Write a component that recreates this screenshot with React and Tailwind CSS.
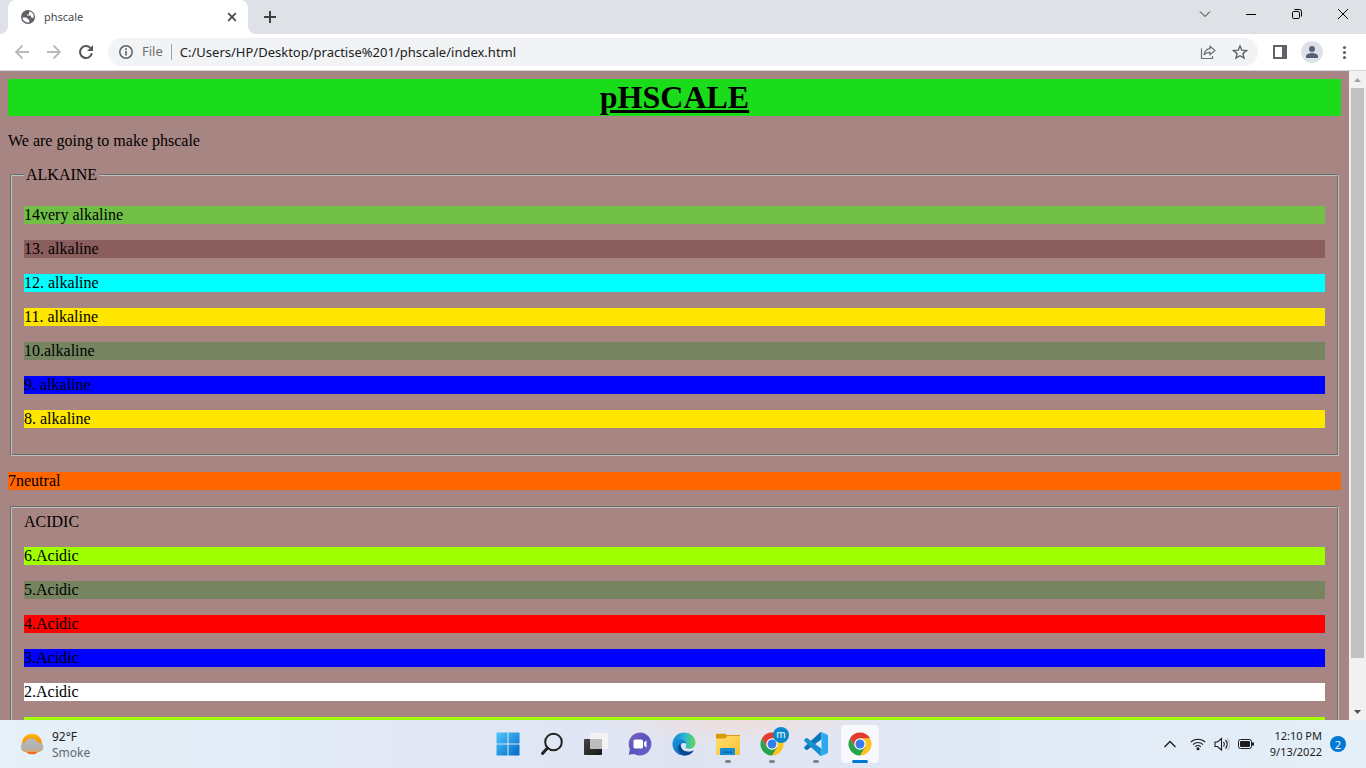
import React from "react";

const alkaline = [
  { text: "14very alkaline", color: "bg-[#72bf48]" },
  { text: "13. alkaline", color: "bg-[#8b5e5e]" },
  { text: "12. alkaline", color: "bg-[#00ffff]" },
  { text: "11. alkaline", color: "bg-[#ffe600]" },
  { text: "10.alkaline", color: "bg-[#768560]" },
  { text: "9. alkaline", color: "bg-[#0000ff]" },
  { text: "8. alkaline", color: "bg-[#ffe600]" },
];

const acidic = [
  { text: "6.Acidic", color: "bg-[#a0ff00]" },
  { text: "5.Acidic", color: "bg-[#768560]" },
  { text: "4.Acidic", color: "bg-[#ff0000]" },
  { text: "3.Acidic", color: "bg-[#0000ff]" },
  { text: "2.Acidic", color: "bg-white" },
];

function TabStrip() {
  return (
    <header className="flex h-[34px] shrink-0 bg-[#dee1e6]">
      <div className="flex w-2 items-end bg-white">
        <div className="h-full w-full rounded-br-lg bg-[#dee1e6]" />
      </div>
      <div className="flex w-60 items-center rounded-t-lg bg-white pr-2 pl-3">
        <svg className="size-4" viewBox="0 0 16 16" aria-hidden="true">
          <circle cx="8" cy="8" r="7" fill="#5f6368" />
          <path d="M2.4 8.4h3.1c1.500 0 2.300.9 2.300 2.100h1.400v2.700c-.4.2-.8.3-1.200.3A5.600 5.600 0 0 1 2.400 8.400zM7 5.400h2V3.700c0-.6.4-1.100 1-1.100A5.700 5.700 0 0 1 13.400 9.300c-.3-.5-.9-.8-1.400-.8h-1V7.300c0-.6-.4-.8-.9-.8H7z" fill="#fff" />
        </svg>
        <span className="ml-2 flex-1 text-[11px] text-[#45494d]">phscale</span>
        <button aria-label="Close tab" className="flex size-4 items-center justify-center">
          <svg className="size-4" viewBox="0 0 16 16" stroke="#45494d" strokeWidth="1.7"><path d="M4.200 4.200l7.600 7.600M11.800 4.200l-7.600 7.600" /></svg>
        </button>
      </div>
      <div className="w-2 bg-white">
        <div className="h-full w-full rounded-bl-lg bg-[#dee1e6]" />
      </div>
      <button aria-label="New tab" className="flex w-7 items-center justify-center">
        <svg className="size-4" viewBox="0 0 16 16" stroke="#3c4043" strokeWidth="2"><path d="M8 2v12M2 8h12" /></svg>
      </button>
      <div className="ml-auto flex h-7">
        <button aria-label="Search tabs" className="flex w-[46px] items-center justify-center">
          <svg className="size-4" viewBox="0 0 16 16" fill="none" stroke="#222"><path d="M3 5.500l5 5 5-5" /></svg>
        </button>
        <button aria-label="Minimize" className="flex w-[46px] items-center justify-center">
          <svg className="size-4" viewBox="0 0 16 16" stroke="#000"><path d="M3 8.500h10" /></svg>
        </button>
        <button aria-label="Restore" className="flex w-[46px] items-center justify-center">
          <svg className="size-4" viewBox="0 0 16 16" fill="none" stroke="#000"><rect x="3.500" y="5.500" width="7" height="7" rx="1.200" /><path d="M5.500 3.500h5a2 2 0 0 1 2 2v5" /></svg>
        </button>
        <button aria-label="Close window" className="flex w-[46px] items-center justify-center">
          <svg className="size-4" viewBox="0 0 16 16" stroke="#000"><path d="M3 3l10 10M13 3L3 13" /></svg>
        </button>
      </div>
    </header>
  );
}

function Toolbar() {
  return (
    <nav className="flex h-[37px] shrink-0 items-center gap-1 border-b border-[#d5d7da] bg-white px-2">
      <button aria-label="Back" className="flex size-7 items-center justify-center">
        <svg className="size-4" viewBox="0 0 16 16" fill="none" stroke="#bababc" strokeWidth="1.800"><path d="M15 8H2.500M8.500 1.500L2 8l6.500 6.500" /></svg>
      </button>
      <button aria-label="Forward" className="flex size-7 items-center justify-center">
        <svg className="size-4" viewBox="0 0 16 16" fill="none" stroke="#bababc" strokeWidth="1.800"><path d="M1 8h12.500M7.500 1.500L14 8l-6.500 6.500" /></svg>
      </button>
      <button aria-label="Reload" className="flex size-7 items-center justify-center">
        <svg className="size-4" viewBox="0 0 16 16" fill="none"><path d="M13.900 9.300A6 6 0 1 1 12.400 3.900" stroke="#54585d" strokeWidth="2" /><path d="M15 1v6H9z" fill="#54585d" /></svg>
      </button>
      <div className="ml-1 mr-1 flex h-7 flex-1 items-center rounded-full bg-[#f1f3f4] px-2.5">
        <svg className="size-4" viewBox="0 0 16 16" fill="none" aria-hidden="true"><circle cx="8" cy="8" r="6.200" stroke="#5f6368" strokeWidth="1.500" /><path d="M8 7v4.500M8 4.300v1.600" stroke="#5f6368" strokeWidth="1.600" /></svg>
        <label htmlFor="address" className="ml-2 text-[13px] text-[#6b6f74]">File</label>
        <span className="mx-2 h-4 w-px bg-[#9aa0a6]" />
        <input id="address" className="h-5 min-w-0 flex-1 bg-transparent text-[13px] text-[#202124] outline-none" defaultValue="C:/Users/HP/Desktop/practise%201/phscale/index.html" />
        <button aria-label="Share" className="flex w-8 items-center justify-center">
          <svg className="size-4" viewBox="0 0 16 16" fill="none" stroke="#6b6f74" strokeWidth="1.200"><path d="M1.500 4.500v10h11v-2.500" /><path d="M10 2.200l5 4.300-5 4.300V8.300c-2.600 0-4.500.7-6 2.700.5-3.400 2.500-6 6-6.300z" /></svg>
        </button>
        <button aria-label="Bookmark this page" className="-mr-2 flex w-8 items-center justify-center">
          <svg className="size-4" viewBox="0 0 16 16" fill="none" stroke="#5f6368" strokeWidth="1.400"><path d="M8 2l1.800 4.200 4.600.4-3.500 3 1.100 4.500L8 11.700l-4 2.400 1.100-4.500-3.500-3 4.600-.4z" /></svg>
        </button>
      </div>
      <button aria-label="Side panel" className="flex size-7 items-center justify-center">
        <svg className="size-4" viewBox="0 0 16 16"><path d="M1 1h14v14H1zM3 3v10h7V3z" fill="#5f6368" fillRule="evenodd" /></svg>
      </button>
      <button aria-label="Profile" className="flex size-7 items-center justify-center">
        <svg className="size-[22px]" viewBox="0 0 22 22"><circle cx="11" cy="11" r="11" fill="#dee1e6" /><circle cx="11" cy="8" r="3" fill="#566177" /><path d="M5 17v-2c0-2 4-3 6-3s6 1 6 3v2z" fill="#566177" /></svg>
      </button>
      <button aria-label="Menu" className="flex size-7 items-center justify-center">
        <svg className="size-4" viewBox="0 0 16 16" fill="#5f6368"><circle cx="8.500" cy="3.500" r="1.600" /><circle cx="8.500" cy="8.500" r="1.600" /><circle cx="8.500" cy="13.500" r="1.600" /></svg>
      </button>
    </nav>
  );
}

function ScalePage() {
  return (
    <main className="min-w-0 flex-1 overflow-hidden bg-[#a78583] p-2 font-['Liberation_Serif',serif] text-base leading-[18px] text-black">
      <h1 className="bg-[#1adc1a] text-center text-[32px] leading-[37px] font-bold underline">pHSCALE</h1>
      <p className="my-4">We are going to make phscale</p>
      <fieldset className="mx-0.5 border-2 border-[#c0c0c0] px-3 pt-1.5 pb-2.5 [border-style:groove]">
        <legend className="px-0.5">ALKAINE</legend>
        {alkaline.map((row) => (
          <p key={row.text} className={`my-4 ${row.color}`}>{row.text}</p>
        ))}
      </fieldset>
      <p className="my-4 bg-[#ff6600]">7neutral</p>
      <fieldset className="mx-0.5 border-2 border-[#c0c0c0] px-3 pt-[5px] pb-2.5 [border-style:groove]">
        <p>ACIDIC</p>
        {acidic.map((row) => (
          <p key={row.text} className={`my-4 ${row.color}`}>{row.text}</p>
        ))}
        <div className="h-[18px] bg-[#a0ff00]" />
      </fieldset>
    </main>
  );
}

function Scrollbar() {
  return (
    <div className="flex w-[17px] shrink-0 flex-col bg-[#f1f1f1] px-0.5">
      <button aria-label="Scroll up" className="flex h-[17px] items-center justify-center">
        <svg className="h-1 w-[7px]" viewBox="0 0 7 4"><path d="M0 4L3.500 0 7 4z" fill="#a3a3a3" /></svg>
      </button>
      <div className="grow-[570] bg-[#c1c1c1]" />
      <div className="grow-[45]" />
      <button aria-label="Scroll down" className="flex h-[17px] items-center justify-center">
        <svg className="h-1 w-[7px]" viewBox="0 0 7 4"><path d="M0 0L3.500 4 7 0z" fill="#505050" /></svg>
      </button>
    </div>
  );
}

function ChromeLogo() {
  return (
    <svg className="size-6" viewBox="0 0 24 24">
      <path d="M12 12V6.250h9.960A11.500 11.500 0 0 1 12 23.500l-1-5z" fill="#fcc31e" />
      <path d="M12 12l4.980 2.900L12 23.500A11.500 11.500 0 0 1 2.040 6.250L7.020 14.900z" fill="#2ba24c" />
      <path d="M12 6.250h9.960A11.500 11.500 0 0 0 2.040 6.250L7.020 14.900 12 12z" fill="#e33b2e" />
      <circle cx="12" cy="12" r="5.750" fill="#fff" />
      <circle cx="12" cy="12" r="4.500" fill="#367af0" />
    </svg>
  );
}

function TaskButton({ label, running, active, children }) {
  return (
    <button aria-label={label} className="relative flex h-12 w-11 items-center justify-center">
      {active && <span className="absolute inset-x-[3px] inset-y-[5px] rounded bg-[#f8f9fd]" />}
      <span className="relative flex">{children}</span>
      {running && <span className="absolute bottom-[5px] h-[3px] w-1.5 rounded-full bg-[#858585]" />}
      {active && <span className="absolute bottom-[5px] h-[3px] w-4 rounded-full bg-[#0078d4]" />}
    </button>
  );
}

function Taskbar() {
  return (
    <footer className="grid h-12 shrink-0 grid-cols-[1fr_auto_1fr] items-center bg-linear-to-r from-[#e5f0f8] via-[#dfe4f3] to-[#e4eff8] text-xs text-[#1c1c1c]">
      <button className="flex items-center gap-2 pl-5 text-left">
        <svg className="size-6" viewBox="0 0 24 24" aria-hidden="true">
          <defs>
            <linearGradient id="sun" x2="0" y2="1"><stop stopColor="#ffb300" /><stop offset="1" stopColor="#f36b16" /></linearGradient>
            <linearGradient id="cloud" x2="0" y2="1"><stop stopColor="#b7babf" /><stop offset=".65" stopColor="#afb1b4" /><stop offset="1" stopColor="#d5a56d" /></linearGradient>
          </defs>
          <circle cx="12" cy="12" r="10.300" fill="url(#sun)" />
          <path d="M5.500 20a5 5 0 0 1-.3-9.900C6.500 7.600 8.800 6.500 11.500 6.500c3 0 5 1.500 6 4.100h1.200a4.700 4.700 0 0 1 0 9.400z" fill="url(#cloud)" />
        </svg>
        <span className="pt-0.5 leading-4"><span className="block">92°F</span><span className="block text-[#626970]">Smoke</span></span>
      </button>
      <div className="flex bg-[radial-gradient(ellipse_at_65%_0%,#f0dfdc,transparent_40%)] pl-0.5">
        <TaskButton label="Start">
          <svg className="size-6" viewBox="0 0 24 24"><defs><linearGradient id="win" x2="1" y2="1"><stop stopColor="#4fc8fa" /><stop offset="1" stopColor="#0068c8" /></linearGradient></defs><path d="M.500.500H11.500V11.500H.500zM12.500.500h11v11h-11zM.500 12.500h11v11H.500zM12.500 12.500h11v11h-11z" fill="url(#win)" /></svg>
        </TaskButton>
        <TaskButton label="Search">
          <svg className="size-6" viewBox="0 0 24 24" fill="none" stroke="#222"><circle cx="13.500" cy="10" r="8.300" strokeWidth="2" /><path d="M7.500 16L2.500 21.500" strokeWidth="3" strokeLinecap="round" /></svg>
        </TaskButton>
        <TaskButton label="Task view">
          <svg className="size-6" viewBox="0 0 24 24"><defs><linearGradient id="dark" x2="1" y2="1"><stop stopColor="#444" /><stop offset="1" stopColor="#181818" /></linearGradient></defs><rect x="0" y="7" width="18" height="16" rx="1" fill="url(#dark)" /><rect x="6" y="1" width="18" height="16" rx="1" fill="#f3f3f3" /><path d="M6 7h12v10H6z" fill="#bdbdbd" /></svg>
        </TaskButton>
        <TaskButton label="Chat">
          <svg className="size-6" viewBox="0 0 24 24"><defs><linearGradient id="chat" x2="1" y2="1"><stop stopColor="#8260bd" /><stop offset=".5" stopColor="#5955bf" /><stop offset="1" stopColor="#6863cb" /></linearGradient></defs><path d="M12 .500A11.500 11.500 0 1 1 6 21.900L.8 22.800 1.800 17A11.500 11.500 0 0 1 12 .500z" fill="url(#chat)" /><rect x="5.500" y="7.500" width="9.500" height="9" rx="1.500" fill="#fff" /><path d="M16 10.500l2.500-2.200v7.400L16 13.500z" fill="#fff" /></svg>
        </TaskButton>
        <TaskButton label="Edge">
          <svg className="size-6" viewBox="0 0 24 24">
            <defs><linearGradient id="edgeTop" x2="1"><stop stopColor="#1684d5" /><stop offset=".55" stopColor="#2bb9cf" /><stop offset="1" stopColor="#64d852" /></linearGradient><linearGradient id="edgeBody" x2="1" y2="1"><stop stopColor="#1596e0" /><stop offset="1" stopColor="#075ba9" /></linearGradient></defs>
            <path d="M.5 11.500A11.500 11.500 0 0 1 12 .5c6.500 0 11.500 4.500 11.500 10 0 4-3 6.300-6.400 6.300-2.200 0-3.700-.8-3.700-1.700 0-.8 1-1.300 1-3.200 0-2.800-2.800-5-6.300-5-3.800 0-6.800 2.200-7.600 4.600z" fill="url(#edgeTop)" />
            <path d="M.5 11.500C1 8.500 4 6.800 7.500 6.800c4.500 0 6.900 2.800 6.900 5.200-1-1-2.400-1.300-3.600-1-2.300.7-2.400 3.700-1 5.700 2.300 3.500 7.700 4 12.100 1.500-1.900 3.300-5.500 5.300-9.900 5.300A11.500 11.500 0 0 1 .5 11.500z" fill="url(#edgeBody)" />
            <path d="M8.300 11.500c-4 3.500-2 9.500 3.700 12 4.300 0 8-2 9.900-5.300-4.400 2.500-9.800 2-12.100-1.500-1.200-1.800-1.500-3.700-1.500-5.200z" fill="#09488f" />
          </svg>
        </TaskButton>
        <TaskButton label="File Explorer" running>
          <svg className="size-6" viewBox="0 0 24 24"><defs><linearGradient id="folder" x2="1" y2="1"><stop stopColor="#ffdf70" /><stop offset="1" stopColor="#fac02e" /></linearGradient></defs><path d="M0 7V3c0-.8.500-1.300 1.300-1.300H9L11 3h12c.6 0 1 .4 1 1v4H0z" fill="#d89a0b" /><path d="M0 6.500h9L11.500 4H23c.6 0 1 .4 1 1v17c0 .6-.4 1-1 1H1c-.6 0-1-.4-1-1z" fill="url(#folder)" /><path d="M4 23v-5.500c0-1 .8-1.500 1.500-1.500h12c1 0 1.500.7 1.500 1.500V23z" fill="#168bd5" /><path d="M7 19.500h9V21H7z" fill="#0f66ad" /></svg>
        </TaskButton>
        <TaskButton label="Chrome, profile m" running>
          <ChromeLogo />
          <span className="absolute -top-[5px] -right-[5px] flex size-4 items-center justify-center rounded-full bg-[#0b87cc] pb-0.5 text-[10px] leading-none text-white">m</span>
        </TaskButton>
        <TaskButton label="Visual Studio Code" running>
          <svg className="size-6" viewBox="0 0 24 24"><path d="M17.500 0v7.200L3.500 17.800c-.5.4-1.100.4-1.600 0L.5 16.400c-.5-.5-.5-1.200 0-1.700L16 .500z" fill="#0875b9" /><path d="M17.500 24v-7.200L3.500 6.200c-.5-.4-1.100-.4-1.600 0L.5 7.600c-.5.500-.5 1.200 0 1.700L16 23.500z" fill="#168fd3" /><path d="M17 0l6 2.500c.6.300 1 .8 1 1.500v16c0 .7-.4 1.200-1 1.500L17 24c-.6.100-1.200-.1-1.600-.6.900.9 2.100.3 2.100-1V1.600c0-1.300-1.200-1.900-2.100-1 .4-.5 1-.7 1.600-.6z" fill="#2aaaf0" /></svg>
        </TaskButton>
        <TaskButton label="Chrome" active><ChromeLogo /></TaskButton>
      </div>
      <div className="flex items-center justify-end pr-5">
        <button aria-label="Hidden icons" className="mr-3">
          <svg className="size-4" viewBox="0 0 16 16" fill="none" stroke="#1c1c1c" strokeWidth="1.400"><path d="M2.500 11L8 5.500l5.500 5.500" /></svg>
        </button>
        <button aria-label="Network, volume and battery" className="mr-4 flex gap-2">
          <svg className="size-4" viewBox="0 0 16 16" fill="none" stroke="#1c1c1c" strokeWidth="1.100"><path d="M.7 6.200a10.400 10.400 0 0 1 14.600 0M3 8.600a7 7 0 0 1 10 0M5.200 10.800a4 4 0 0 1 5.600 0" /><circle cx="8" cy="12.800" r="1" fill="#1c1c1c" /></svg>
          <svg className="size-4" viewBox="0 0 16 16" fill="none" stroke="#1c1c1c" strokeWidth="1.100"><path d="M1 6v4.500h2.500L7.500 14V2.500L3.500 6zM9.500 6c1 1 1 3.500 0 4.500M11.500 4c2.200 2.200 2.200 6.300 0 8.500" /><path d="M13.500 2.500c3 3 3 8.500 0 11.500" stroke="#bcc1c5" /></svg>
          <svg className="size-4" viewBox="0 0 16 16" fill="none"><rect x=".5" y="3.500" width="13" height="9" rx="2" stroke="#1c1c1c" /><rect x="2" y="5" width="10" height="6" rx="1" fill="#1c1c1c" /><path d="M15 6.500v3" stroke="#1c1c1c" strokeWidth="2" /></svg>
        </button>
        <button className="text-right text-[11px] leading-4"><span className="block">12:10 PM</span><span className="block">9/13/2022</span></button>
        <button aria-label="2 notifications" className="ml-2 flex size-4 items-center justify-center rounded-full bg-[#0078d4] text-[11px] leading-none text-white">2</button>
      </div>
    </footer>
  );
}

export default function App() {
  return (
    <div className="flex h-screen flex-col overflow-hidden font-['Noto_Sans','Open_Sans',sans-serif]">
      <TabStrip />
      <Toolbar />
      <div className="flex min-h-0 flex-1">
        <ScalePage />
        <Scrollbar />
      </div>
      <Taskbar />
    </div>
  );
}
